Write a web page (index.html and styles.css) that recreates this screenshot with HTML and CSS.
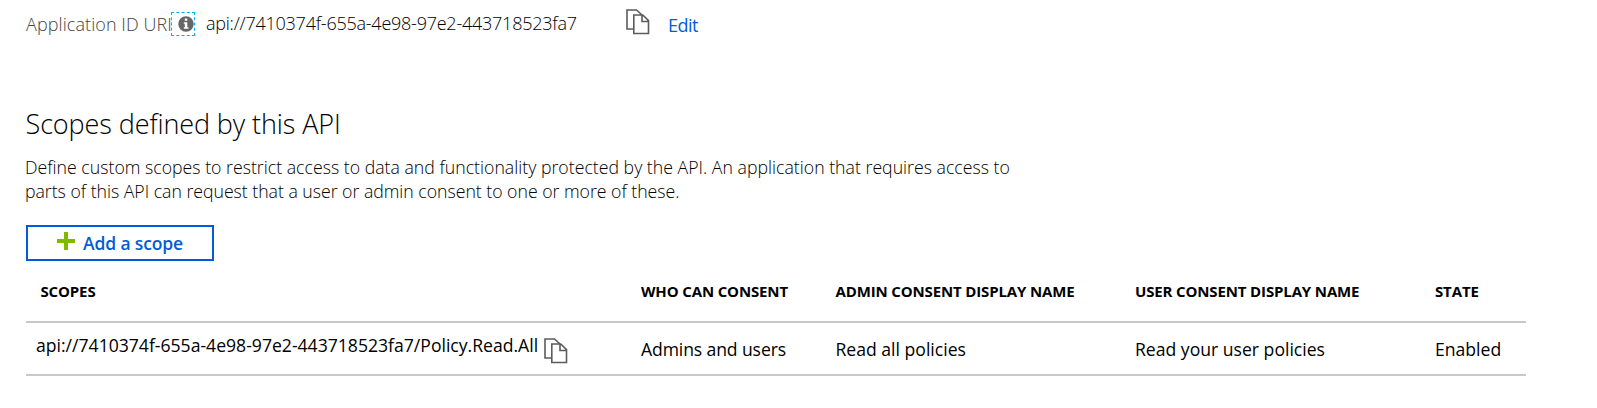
FILE: index.html
```
<!DOCTYPE html>
<html lang="en">
<head>
<meta charset="utf-8">
<title>Expose an API</title>
<link rel="stylesheet" href="styles.css">
</head>
<body>
<svg class="defs" aria-hidden="true">
  <symbol id="copy" viewBox="0 0 24 26">
    <path d="M7.5 20H1V1h9.5l5 4.5M7.8 6h9l5.7 5.7V24.5H7.8z M16 6v6.5h6.5" fill="none" stroke="#5c5c5c" stroke-width="1.6"/>
  </symbol>
</svg>
<main class="page">
  <div class="uri-row">
    <span class="uri-label">Application ID URI</span>
    <span class="info">
      <svg width="16" height="16" viewBox="0 0 16 16"><circle cx="8" cy="8" r="7.7" fill="#666"/><path d="M6.8 2.5h2.5v2.3H6.8zM5.8 6.2h3.5v5h1.2v1.5H5.8v-1.5h1V7.7h-1z" fill="#fff"/></svg>
    </span>
    <span class="uri-value">api://7410374f-655a-4e98-97e2-443718523fa7</span>
    <svg class="copy-top" width="24" height="26"><use href="#copy"/></svg>
    <a class="edit">Edit</a>
  </div>
  <h1 class="title">Scopes defined by this API</h1>
  <p class="desc">Define custom scopes to restrict access to data and functionality protected by the API. An application that requires access to<br><span class="desc-end">parts of this API can request that a user or admin consent to one or more of these.</span></p>
  <button class="add">
    <svg class="plus" width="18" height="18" viewBox="0 0 18 18"><path d="M7 0h4v7h7v4h-7v7H7v-7H0V7h7z" fill="#7fba00"/></svg>
    <span>Add a scope</span>
  </button>
  <div class="table">
    <div class="row head">
      <span class="scopes-head">SCOPES</span><span>WHO CAN CONSENT</span><span>ADMIN CONSENT DISPLAY NAME</span><span>USER CONSENT DISPLAY NAME</span><span>STATE</span>
    </div>
    <div class="row item">
      <div class="scope"><span>api://7410374f-655a-4e98-97e2-443718523fa7/Policy.Read.All</span><svg class="copy-row" width="24" height="26"><use href="#copy"/></svg></div>
      <span class="who">Admins and users</span><span class="name">Read all policies</span><span>Read your user policies</span><span>Enabled</span>
    </div>
  </div>
</main>
</body>
</html>
```
FILE: styles.css
```
* { box-sizing: border-box; }
body {
  margin: 0;
  background: #fff;
  color: #000;
  font-family: "Open Sans", sans-serif;
  font-size: 18px;
  line-height: 24px;
  white-space: nowrap;
}
.defs { display: none; }
.page { padding: 9px 71px 0 26px; }
.uri-row {
  display: flex;
  align-items: flex-start;
  height: 97px;
  font-weight: 300;
}
.uri-label { width: 145px; margin-top: 3px; letter-spacing: 0.08px; color: #444; }
.info {
  display: flex;
  width: 24px;
  height: 24px;
  margin-top: 3px;
  padding: 3px 0 0 6px;
  border: 1px dashed #00b4f0;
}
.info svg { flex: none; }
.uri-value { width: 420px; margin: 2px 0 0 11px; letter-spacing: -0.24px; }
.copy-top { width: 24px; }
.edit { margin: 4px 0 0 18px; color: #015cda; font-weight: 400; letter-spacing: -0.5px; }
.title { margin: 0 0 0 -0.5px; font-size: 27px; font-weight: 300; line-height: 36px; letter-spacing: -0.1px; }
.desc { margin: 13px 0 22px -1px; font-size: 17.7px; font-weight: 300; line-height: 24px; letter-spacing: 0.01px; }
.desc-end { letter-spacing: -0.02px; }
.add {
  display: flex;
  width: 188px;
  height: 36px;
  padding: 5px 0 0 29px;
  border: 2px solid #015cda;
  background: #fff;
  color: #015cda;
  font: 600 17.5px/23px "Open Sans", sans-serif;
  letter-spacing: -0.13px;
  gap: 8px;
}
.table { margin-top: 4px; }
.row {
  display: grid;
  grid-template-columns: 615px 194.5px 299.5px 300px 91px;
  border-bottom: 2px solid #c8c8c8;
}
.head {
  height: 58px;
  padding-top: 16px;
  font-size: 15px;
  font-weight: 700;
  line-height: 20px;
  letter-spacing: -0.14px;
}
.scopes-head { padding-left: 14.5px; }
.item { height: 53px; padding-top: 14px; font-size: 17.6px; }
.scope { display: flex; margin-top: -4px; padding-left: 10px; }
.copy-row { margin: 5px 0 0 6px; }
.who { letter-spacing: -0.12px; }
```
